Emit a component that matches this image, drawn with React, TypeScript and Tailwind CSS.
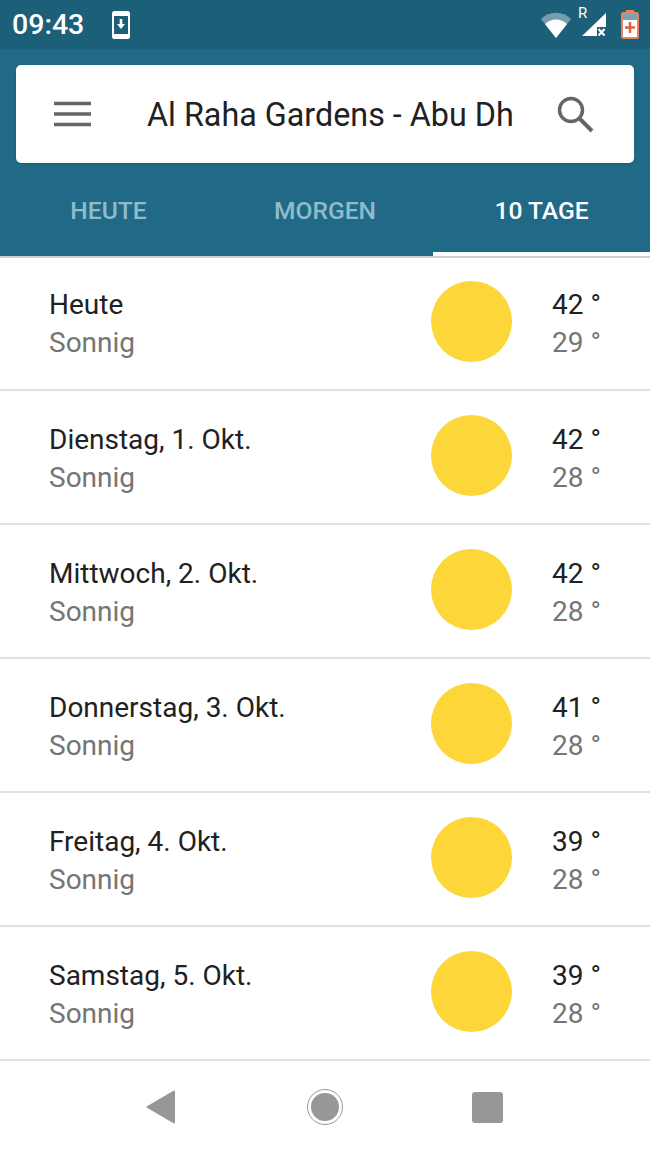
const days = [
  { label: "Heute", high: 42, low: 29 },
  { label: "Dienstag, 1. Okt.", high: 42, low: 28 },
  { label: "Mittwoch, 2. Okt.", high: 42, low: 28 },
  { label: "Donnerstag, 3. Okt.", high: 41, low: 28 },
  { label: "Freitag, 4. Okt.", high: 39, low: 28 },
  { label: "Samstag, 5. Okt.", high: 39, low: 28 },
];

function StatusBar() {
  return (
    <div className="flex h-[49px] items-center bg-[#1c5f78] pl-[12px] pr-[11px] text-white">
      <span className="pt-[2px] text-[28.500px] font-medium leading-none">09:43</span>
      <svg width="20" height="30" viewBox="0 0 20 30" className="ml-[27px]">
        <rect x="1" y="1" width="18" height="28" rx="2.500" fill="#fff" />
        <rect x="3" y="6" width="14" height="18" fill="#1c5f78" />
        <path d="M8.700 9h2.600v5H14l-4 5-4-5h2.700z" fill="#fff" />
      </svg>
      <div className="ml-auto flex items-center">
        <svg width="32" height="26" viewBox="0 0 32 26">
          <path d="M1 7C9.500 -1.500 22.500 -1.500 31 7L16 26z" fill="#fff" fillOpacity="0.4" />
          <path d="M5 12C11.500 6 20.500 6 27 12L16 26z" fill="#fff" />
        </svg>
        <span className="relative ml-[9px] h-[34px] w-[26px]">
          <span className="absolute left-[-3px] top-[-2px] text-[15px] leading-none">R</span>
          <svg width="26" height="26" viewBox="0 0 26 26" className="absolute left-0 top-[3px]">
            <path d="M25 2V16H16V25H1z" fill="#fff" />
            <path d="M17.500 18l6 6.500M23.500 18l-6 6.500" stroke="#fff" strokeWidth="2.200" />
          </svg>
        </span>
        <svg width="18" height="29" viewBox="0 0 18 29" className="ml-[14px]">
          <rect x="5" y="0" width="8" height="3" fill="#e8825f" />
          <rect x="1" y="3" width="16" height="25" rx="1.500" fill="#fff" stroke="#e8825f" strokeWidth="2" />
          <rect x="2" y="4" width="14" height="6" fill="#7fa3b2" />
          <path d="M9 12v11M4 17.500h10" stroke="#e0623c" strokeWidth="2.500" />
        </svg>
      </div>
    </div>
  );
}

function SearchCard() {
  return (
    <div className="mx-4 mt-4 flex h-[98px] items-center rounded-[5px] bg-white shadow-sm">
      <svg width="38" height="26" viewBox="0 0 38 26" className="ml-[38px] shrink-0">
        <path d="M0 2.500H37M0 13H37M0 23.500H37" stroke="#666" strokeWidth="3.500" />
      </svg>
      <div className="ml-[55px] w-[380px] whitespace-nowrap pt-[2px] text-[32.300px] leading-none text-[#212121]">
        Al Raha Gardens - Abu Dh
      </div>
      <svg width="38" height="38" viewBox="0 0 38 38" className="ml-[29px] shrink-0">
        <circle cx="15" cy="15" r="11.500" fill="none" stroke="#666" strokeWidth="3.500" />
        <path d="M23.500 23.500L36 36" stroke="#666" strokeWidth="4" />
      </svg>
    </div>
  );
}

function Tabs() {
  return (
    <div className="flex h-[93px] text-[24.600px] font-medium">
      <div className="flex w-[217px] items-center justify-center pt-[3px] text-[#8fbccb]">HEUTE</div>
      <div className="flex w-[216px] items-center justify-center pt-[3px] text-[#8fbccb]">MORGEN</div>
      <div className="flex w-[217px] items-center justify-center border-b-[4px] border-white pt-[7px] text-white">
        10 TAGE
      </div>
    </div>
  );
}

function DayRow({ label, high, low }: { label: string; high: number; low: number }) {
  return (
    <div className="group flex h-[134px] items-center border-b-2 border-[#e0e0e0] pb-[4px] pl-[49px] pr-[40px] first-of-type:h-[133px]">
      <div className="flex-1 pt-[8px] group-first-of-type:pt-[4px]">
        <div className="text-[28px] leading-[38px] text-[#212121]">{label}</div>
        <div className="text-[28px] leading-[38px] text-[#757575]">Sonnig</div>
      </div>
      <div className="h-[81px] w-[81px] rounded-full bg-[#fdd63a]" />
      <div className="ml-[40px] w-[58px] whitespace-nowrap pt-[8px] text-[28px] group-first-of-type:pt-[4px]">
        <div className="leading-[38px] text-[#212121]">{high} °</div>
        <div className="leading-[38px] text-[#757575]">{low} °</div>
      </div>
    </div>
  );
}

function NavBar() {
  return (
    <div className="flex h-[96px] items-center bg-white pb-[4px]">
      <svg width="30" height="34" viewBox="0 0 30 34" className="ml-[146px]">
        <path d="M28 1.500V32.500L1.500 17z" fill="#979797" stroke="#979797" strokeWidth="2" strokeLinejoin="round" />
      </svg>
      <div className="ml-[131px] flex h-[36px] w-[36px] items-center justify-center rounded-full border border-[#979797]">
        <div className="h-[28px] w-[28px] rounded-full bg-[#979797]" />
      </div>
      <div className="ml-[129px] h-[31px] w-[31px] rounded-[3px] bg-[#979797]" />
    </div>
  );
}

export default function App() {
  return (
    <div className="h-[1156px] w-[650px] overflow-hidden bg-white font-['Roboto',sans-serif]">
      <StatusBar />
      <div className="flex h-[207px] flex-col bg-[#206a87]">
        <SearchCard />
        <Tabs />
      </div>
      <div className="h-[2px] bg-[#cfcfcf]" />
      <div>
        {days.map((day) => (
          <DayRow key={day.label} {...day} />
        ))}
      </div>
      <NavBar />
    </div>
  );
}
